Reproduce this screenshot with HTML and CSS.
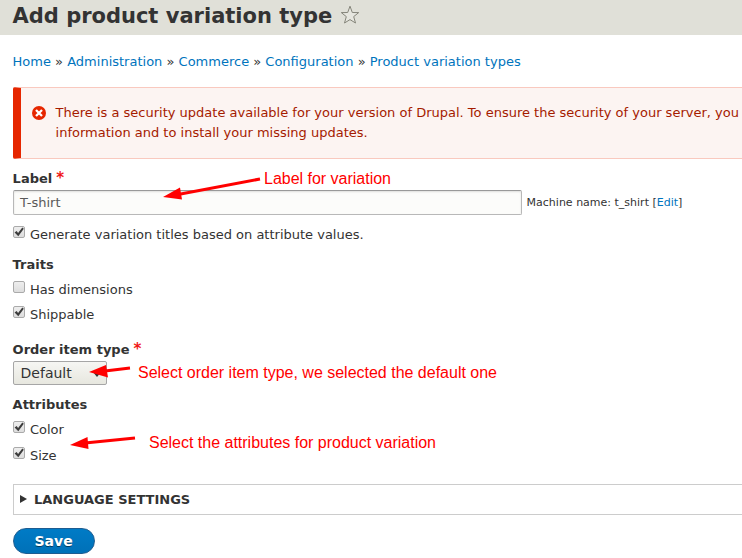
FILE: index.html
```html
<!DOCTYPE html>
<html lang="en">
<head>
<meta charset="utf-8">
<title>Add product variation type</title>
<link rel="stylesheet" href="styles.css">
</head>
<body>
<svg class="symbols" aria-hidden="true">
  <symbol id="tick" viewBox="0 0 12 12"><path d="M1.6 6.4 3.6 4.9 5.1 7 9.3 1.6 10.8 2.7 5.3 10.3Z" fill="#3c3c3c"/></symbol>
</svg>
<header class="page-header">
  <h1>Add product variation type</h1>
  <svg class="star" viewBox="0 0 20 20"><path d="M10 1.2 12.3 7.5 18.7 7.6 13.7 11.6 15.5 18 10 14.6 4.5 18 6.3 11.6 1.3 7.6 7.7 7.5Z" fill="#e6e6df" stroke="#85857a" stroke-width="1" stroke-linejoin="round"/></svg>
</header>
<main class="content">
  <nav class="breadcrumb"><a>Home</a> » <a>Administration</a> » <a>Commerce</a> » <a>Configuration</a> » <a>Product variation types</a></nav>
  <section class="message">
    <svg class="error-icon" viewBox="0 0 14 14"><circle cx="7" cy="7" r="7" fill="#e62600"/><path d="M4 4 10 10M10 4 4 10" stroke="#fff" stroke-width="2.3"/></svg>
    <p>There is a security update available for your version of Drupal. To ensure the security of your server, you<br>information and to install your missing updates.</p>
  </section>
  <form class="form">
    <div class="heading heading-label">Label<span class="required">*</span></div>
    <div class="name-row">
      <div class="text-input">T-shirt</div>
      <small>Machine name: t_shirt [<a>Edit</a>]</small>
    </div>
    <div class="check-row generate"><span class="box"><svg><use href="#tick"/></svg></span><span>Generate variation titles based on attribute values.</span></div>
    <div class="heading heading-traits">Traits</div>
    <div class="check-row dimensions"><span class="box"></span><span>Has dimensions</span></div>
    <div class="check-row shippable"><span class="box"><svg><use href="#tick"/></svg></span><span>Shippable</span></div>
    <div class="heading heading-order">Order item type<span class="required">*</span></div>
    <div class="select">Default<svg class="caret" viewBox="0 0 8 5"><path d="M0 0H8L4 5Z" fill="#333"/></svg></div>
    <div class="heading heading-attributes">Attributes</div>
    <div class="check-row color"><span class="box"><svg><use href="#tick"/></svg></span><span>Color</span></div>
    <div class="check-row size"><span class="box"><svg><use href="#tick"/></svg></span><span>Size</span></div>
    <div class="details"><svg class="triangle" viewBox="0 0 7 8"><path d="M0 0 7 4 0 8Z" fill="#333"/></svg>LANGUAGE SETTINGS</div>
    <div class="save">Save</div>
  </form>
</main>
<svg class="annotations" viewBox="0 0 742 558">
  <g class="arrows">
    <path class="shaft" d="M260 179 178 194.500M130 368 105 371M135 438 85 443"/>
    <path d="M163 197 180 187.500 182 199.500ZM89 372 106 365 108 377.500ZM70 445 87.500 437 88.500 449Z"/>
  </g>
  <text x="264" y="184" textLength="127">Label for variation</text>
  <text x="138" y="378" textLength="359">Select order item type, we selected the default one</text>
  <text x="149" y="448" textLength="287">Select the attributes for product variation</text>
</svg>
</body>
</html>
```

FILE: styles.css
```css
* { box-sizing: border-box; }
body {
  position: relative;
  width: 742px;
  height: 558px;
  margin: 0;
  overflow: hidden;
  background: #fff;
  color: #333;
  font: 13px/20px "DejaVu Sans", sans-serif;
}
a { color: #0074bd; }
.symbols { position: absolute; width: 0; height: 0; }
.page-header {
  display: flex;
  height: 35px;
  padding-left: 12.5px;
  background: #e0e0d8;
}
h1 { width: 320px; margin: 0; font-size: 21px; line-height: 33px; white-space: nowrap; }
.star { width: 20px; height: 20px; margin: 5px 0 0 7.500px; }
.content { padding-left: 12.600px; }
.breadcrumb { padding-top: 17px; height: 52px; white-space: nowrap; }
.message {
  display: flex;
  height: 72px;
  padding: 15px 0 0 11px;
  border: 1px solid #f9c9bf;
  border-left: 8px solid #e62600;
  border-right: 0;
  border-radius: 2px 0 0 2px;
  background: #fcf4f2;
  color: #a51b00;
  white-space: nowrap;
}
.error-icon { flex: none; width: 14px; height: 14px; margin: 3px 10px 0 0; }
.message p { margin: 0; }
.form { display: flex; flex-direction: column; }
.heading { font-weight: bold; height: 20px; line-height: 20px; }
.required { margin-left: 4px; color: #f01818; font-size: 15px; line-height: 15px; }
.heading-label { margin-top: 10px; }
.name-row { display: flex; align-items: center; height: 25px; margin-top: 1px; }
.text-input {
  width: 509px;
  height: 25px;
  padding-left: 6.400px;
  border: 1px solid #b8b8b8;
  border-top-color: #999;
  border-radius: 2px;
  background: #fcfcfa;
  box-shadow: inset 0 1px 2px rgba(0, 0, 0, .12);
  color: #595959;
  line-height: 23px;
}
small { margin-left: 5px; font-size: 11px; }
.check-row { display: flex; height: 20px; }
.box {
  width: 12px;
  height: 12px;
  margin-right: 5.300px;
  border: 1px solid #aaa;
  border-radius: 2px;
  background: linear-gradient(#eee, #ddd);
}
.box svg { display: block; width: 12px; height: 12px; margin: -1px; }
.generate { margin-top: 10px; }
.generate .box, .dimensions .box, .shippable .box, .color .box, .size .box { margin-top: 1px; }
.heading-traits { margin-top: 10px; }
.dimensions { margin-top: 5px; }
.shippable { margin-top: 5px; }
.heading-order { margin-top: 15px; }
.select {
  display: flex;
  align-items: center;
  width: 94px;
  height: 24px;
  margin-top: 1px;
  padding-left: 7px;
  border: 1px solid #a6a6a6;
  border-radius: 2px;
  background: linear-gradient(#f6f6f3, #e7e7df);
  font-size: 14px;
}
.caret { width: 8px; height: 5px; margin: 3px 0 0 21px; }
.heading-attributes { margin-top: 10px; }
.color { margin-top: 5px; }
.size { margin-top: 6px; }
.details {
  display: flex;
  align-items: center;
  height: 31px;
  margin-top: 18px;
  padding-left: 6.400px;
  border: 1px solid #ccc;
  border-right: 0;
  font-weight: bold;
}
.triangle { width: 7px; height: 8px; margin: -2px 7px 0 0; }
.save {
  width: 82px;
  height: 26px;
  margin-top: 13px;
  border: 1px solid #1e5c90;
  border-radius: 13px;
  background: linear-gradient(#007bc6, #0071b8);
  color: #fff;
  font-size: 14px;
  font-weight: bold;
  line-height: 24px;
  text-align: center;
  text-shadow: 0 1px rgba(0, 0, 0, .5);
}
.annotations { position: absolute; inset: 0; width: 742px; height: 558px; fill: #f00; font: 16px "Liberation Sans", sans-serif; }
.shaft { fill: none; stroke: #f00; stroke-width: 3; }
```
